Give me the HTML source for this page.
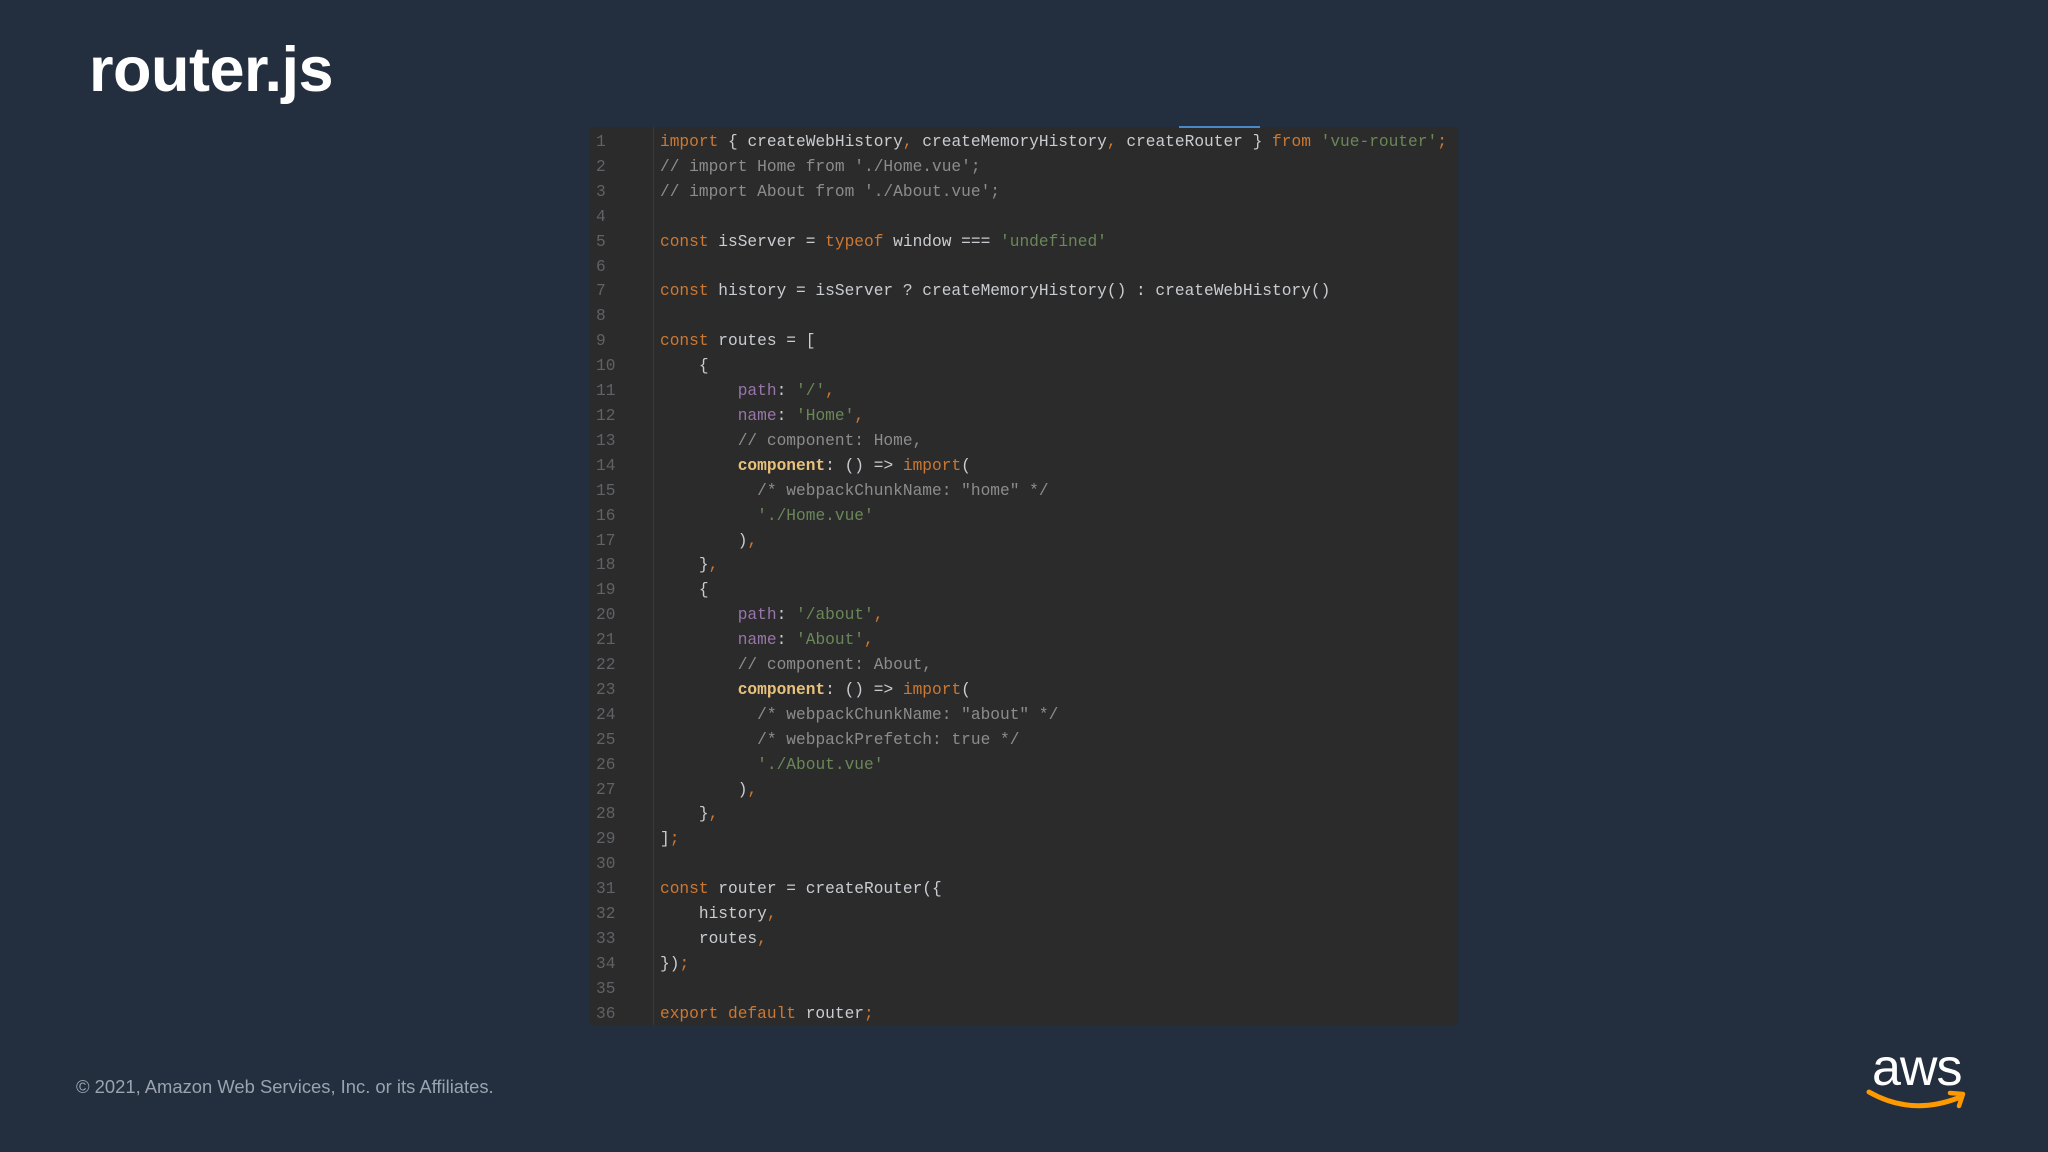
<!DOCTYPE html>
<html><head><meta charset="utf-8"><style>
html,body{margin:0;padding:0;width:2048px;height:1152px;background:#232f3e;overflow:hidden;font-family:"Liberation Sans",sans-serif}
.t{position:absolute;left:89px;top:34px;font-size:63px;font-weight:bold;color:#fff;letter-spacing:-0.5px}
.box{position:absolute;left:590px;top:127px;width:868px;height:898px;background:#2b2b2b}
.tab{position:absolute;left:1179px;top:126px;width:81px;height:2px;background:#4a88c7}
.fold{position:absolute;left:653px;top:127px;width:1px;height:898px;background:#3a3a3a}
pre{margin:0;position:absolute;top:130px;font-family:"Liberation Mono",monospace;font-size:16.2px;line-height:24.9px}
.ln{left:596px;color:#5f6266}
.code{left:660px;color:#c9ccd0}
.k{color:#cc7832}.s{color:#6a8759}.c{color:#8c8c8c}.p{color:#9876aa}.f{color:#e8c17a;font-weight:bold}
.foot{position:absolute;left:76px;top:1076px;font-size:18.4px;color:#9aa3ae}
.aws{position:absolute;left:1872px;top:1038px;font-size:52px;color:#fff;letter-spacing:-1px;font-family:"Liberation Sans",sans-serif}
</style></head><body>
<div class="t">router.js</div>
<div class="box"></div><div class="tab"></div><div class="fold"></div>
<pre class="ln">1
2
3
4
5
6
7
8
9
10
11
12
13
14
15
16
17
18
19
20
21
22
23
24
25
26
27
28
29
30
31
32
33
34
35
36</pre>
<pre class="code"><span class="k">import</span> { createWebHistory<span class="k">,</span> createMemoryHistory<span class="k">,</span> createRouter } <span class="k">from</span> <span class="s">'vue-router'</span><span class="k">;</span>
<span class="c">// import Home from './Home.vue';</span>
<span class="c">// import About from './About.vue';</span>

<span class="k">const</span> isServer = <span class="k">typeof</span> window === <span class="s">'undefined'</span>

<span class="k">const</span> history = isServer ? createMemoryHistory() : createWebHistory()

<span class="k">const</span> routes = [
    {
        <span class="p">path</span>: <span class="s">'/'</span><span class="k">,</span>
        <span class="p">name</span>: <span class="s">'Home'</span><span class="k">,</span>
        <span class="c">// component: Home,</span>
        <span class="f">component</span>: () =&gt; <span class="k">import</span>(
          <span class="c">/* webpackChunkName: "home" */</span>
          <span class="s">'./Home.vue'</span>
        )<span class="k">,</span>
    }<span class="k">,</span>
    {
        <span class="p">path</span>: <span class="s">'/about'</span><span class="k">,</span>
        <span class="p">name</span>: <span class="s">'About'</span><span class="k">,</span>
        <span class="c">// component: About,</span>
        <span class="f">component</span>: () =&gt; <span class="k">import</span>(
          <span class="c">/* webpackChunkName: "about" */</span>
          <span class="c">/* webpackPrefetch: true */</span>
          <span class="s">'./About.vue'</span>
        )<span class="k">,</span>
    }<span class="k">,</span>
]<span class="k">;</span>

<span class="k">const</span> router = createRouter({
    history<span class="k">,</span>
    routes<span class="k">,</span>
})<span class="k">;</span>

<span class="k">export default</span> router<span class="k">;</span></pre>
<div class="foot">© 2021, Amazon Web Services, Inc. or its Affiliates.</div>
<div class="aws">aws</div>
<svg style="position:absolute;left:1866px;top:1088px" width="104" height="28" viewBox="0 0 104 28"><path d="M3 4 Q45 28 92 10" stroke="#ff9900" stroke-width="5" fill="none" stroke-linecap="round"/><path d="M84 5 L97 6 L93 18" stroke="#ff9900" stroke-width="4.5" fill="none" stroke-linecap="round" stroke-linejoin="round"/></svg>
</body></html>
